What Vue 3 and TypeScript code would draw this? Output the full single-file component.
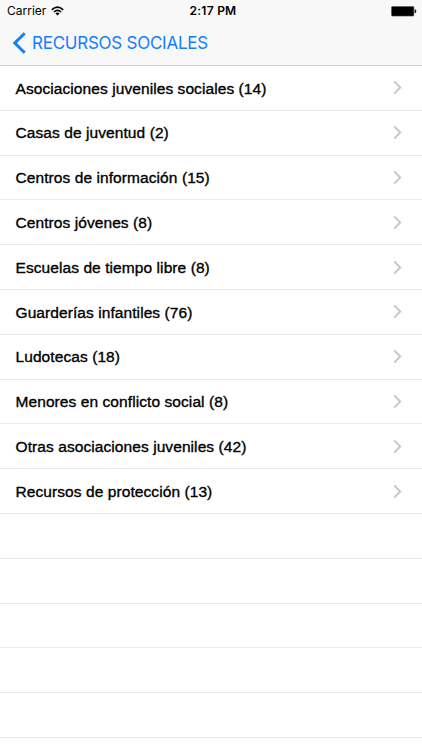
<script setup lang="ts">
interface Resource {
  name: string
  count: number
}

const resources: Resource[] = [
  { name: 'Asociaciones juveniles sociales', count: 14 },
  { name: 'Casas de juventud', count: 2 },
  { name: 'Centros de información', count: 15 },
  { name: 'Centros jóvenes', count: 8 },
  { name: 'Escuelas de tiempo libre', count: 8 },
  { name: 'Guarderías infantiles', count: 76 },
  { name: 'Ludotecas', count: 18 },
  { name: 'Menores en conflicto social', count: 8 },
  { name: 'Otras asociaciones juveniles', count: 42 },
  { name: 'Recursos de protección', count: 13 },
]
const emptyRows = 5
</script>

<template>
  <div class="screen">
    <header class="header">
      <div class="status">
        <div class="carrier">
          <span>Carrier</span>
          <svg class="wifi" width="13" height="10" viewBox="0 0 13 10" fill="none" stroke="#000" stroke-width="1.6">
            <path d="M0.8 3.8Q6.5 -1.5 12.2 3.8" />
            <path d="M2.9 6Q6.5 2.8 10.1 6" />
            <path d="M6.5 9.5L4.5 7.4Q6.5 5.8 8.5 7.4Z" fill="#000" stroke="none" />
          </svg>
        </div>
        <span class="time">2:17 PM</span>
        <svg class="battery" width="26" height="11" viewBox="0 0 26 11">
          <rect x="0.5" y="0.5" width="22.4" height="9.6" rx="1" fill="#000" stroke="#555" stroke-width="0.6" />
          <path d="M23.6 3.6h.8q.8 0 .8.8v1.8q0 .8-.8.8h-.8z" fill="#222" />
        </svg>
      </div>
      <nav class="nav">
        <svg class="back" width="14" height="22" viewBox="0 0 14 22" fill="none" stroke="#147efb" stroke-width="3">
          <path d="M12.7 1.2L2.8 11L12.7 20.8" />
        </svg>
        <span class="title">RECURSOS SOCIALES</span>
      </nav>
    </header>
    <ul class="list">
      <li v-for="item in resources" :key="item.name" class="row">
        <span class="label">{{ item.name }} ({{ item.count }})</span>
        <svg class="chevron" width="9" height="15" viewBox="0 0 9 15" fill="none" stroke="#c7c7cc" stroke-width="2">
          <path d="M1.2 1.4L7.2 7.5L1.2 13.6" />
        </svg>
      </li>
      <li v-for="n in emptyRows" :key="n" class="row"></li>
    </ul>
  </div>
</template>

<style>
body {
  margin: 0;
  background: #fff;
}
</style>

<style scoped>
.screen {
  width: 422px;
  height: 750px;
  overflow: hidden;
  background: #fff;
  color: #000;
}
.header {
  box-sizing: border-box;
  height: 66px;
  background: #f8f8f8;
  border-bottom: 1px solid #d2d2d3;
}
.status {
  display: grid;
  grid-template-columns: 1fr auto 1fr;
  align-items: center;
  height: 22px;
  padding: 0 5px 0 7px;
  font: 12px/22px Inter, "Liberation Sans", sans-serif;
}
.carrier {
  display: flex;
  align-items: center;
  gap: 5px;
}
.time {
  padding-left: 2px;
  font-weight: 600;
  letter-spacing: 0.25px;
}
.battery {
  justify-self: end;
}
.nav {
  display: flex;
  align-items: center;
  height: 42px;
  padding-left: 12px;
}
.title {
  margin-left: 6px;
  color: #147efb;
  font: 17px/24px Inter, "Liberation Sans", sans-serif;
  letter-spacing: -0.25px;
  white-space: nowrap;
}
.list {
  margin: 0;
  padding: 0;
  list-style: none;
}
.row {
  box-sizing: border-box;
  display: flex;
  align-items: center;
  justify-content: space-between;
  height: 44.8px;
  padding: 0 20px 0 15.5px;
  border-bottom: 1px solid #ebebec;
}
.label {
  padding-top: 1.6px;
  font: 15.5px/22px "Liberation Sans", Arial, sans-serif;
  letter-spacing: 0.08px;
  -webkit-text-stroke: 0.35px #000;
  white-space: nowrap;
}
</style>
